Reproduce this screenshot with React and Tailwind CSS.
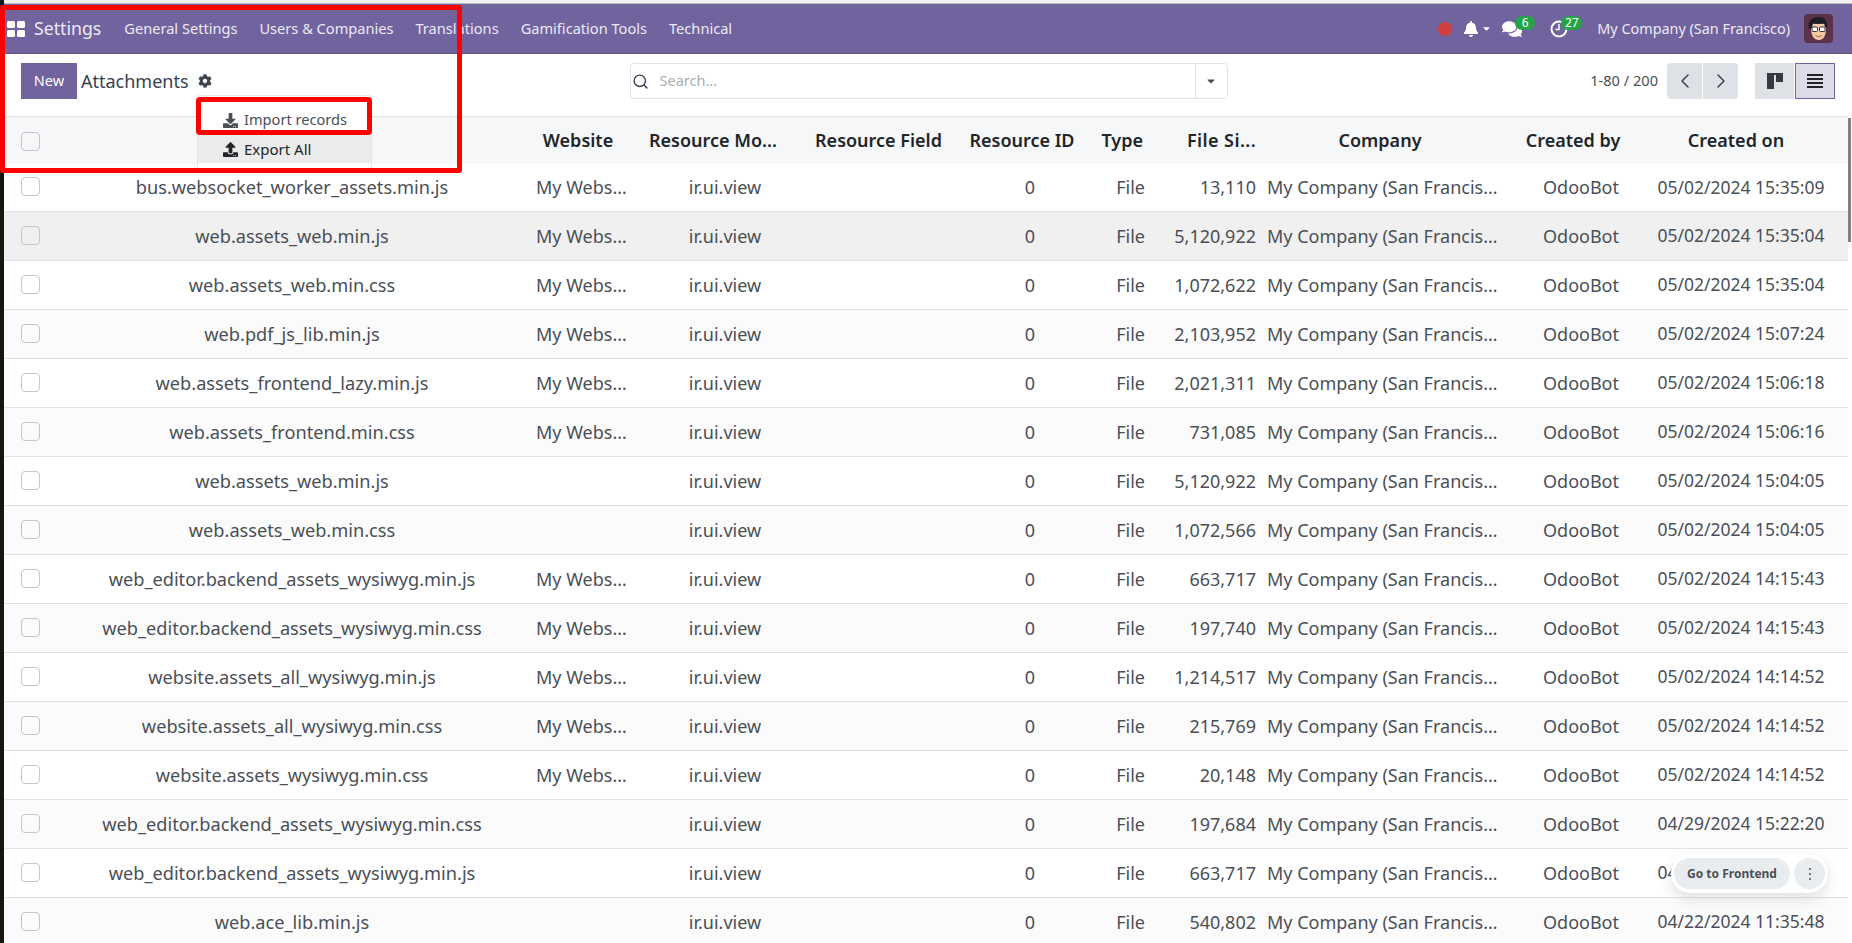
import { FaCog, FaDownload, FaUpload, FaBell, FaComments, FaCaretDown } from "react-icons/fa";
import { LuChevronLeft, LuChevronRight, LuSearch } from "react-icons/lu";

const site = "My Websites";
const co = "My Company (San Francisco)";

const rows = [
  ["bus.websocket_worker_assets.min.js", site, "13,110", "05/02/2024 15:35:09"],
  ["web.assets_web.min.js", site, "5,120,922", "05/02/2024 15:35:04"],
  ["web.assets_web.min.css", site, "1,072,622", "05/02/2024 15:35:04"],
  ["web.pdf_js_lib.min.js", site, "2,103,952", "05/02/2024 15:07:24"],
  ["web.assets_frontend_lazy.min.js", site, "2,021,311", "05/02/2024 15:06:18"],
  ["web.assets_frontend.min.css", site, "731,085", "05/02/2024 15:06:16"],
  ["web.assets_web.min.js", "", "5,120,922", "05/02/2024 15:04:05"],
  ["web.assets_web.min.css", "", "1,072,566", "05/02/2024 15:04:05"],
  ["web_editor.backend_assets_wysiwyg.min.js", site, "663,717", "05/02/2024 14:15:43"],
  ["web_editor.backend_assets_wysiwyg.min.css", site, "197,740", "05/02/2024 14:15:43"],
  ["website.assets_all_wysiwyg.min.js", site, "1,214,517", "05/02/2024 14:14:52"],
  ["website.assets_all_wysiwyg.min.css", site, "215,769", "05/02/2024 14:14:52"],
  ["website.assets_wysiwyg.min.css", site, "20,148", "05/02/2024 14:14:52"],
  ["web_editor.backend_assets_wysiwyg.min.css", "", "197,684", "04/29/2024 15:22:20"],
  ["web_editor.backend_assets_wysiwyg.min.js", "", "663,717", "04/29/2024 15:22:20"],
  ["web.ace_lib.min.js", "", "540,802", "04/22/2024 11:35:48"],
];

const menus = ["General Settings", "Users & Companies", "Translations", "Gamification Tools", "Technical"];

const Checkbox = ({ className }) => (
  <div className={`w-[19px] h-[19px] border border-[#c4c6c9] rounded-[4px] bg-transparent ml-[17px] ${className}`} />
);

const Avatar = () => (
  <svg viewBox="0 0 29 29" className="w-[29px] h-[29px] ml-[14px]">
    <rect width="29" height="29" rx="4" fill="#5b3249" />
    <path d="M7 14c0 8 3 12 8 12s7-5 7-12V10H7z" fill="#f3c9a4" />
    <path d="M5 15C3 7 8 3 15 3c5 0 9 3 8 11l-2-1-1-4c-4 1-8 1-11 0l-1 5z" fill="#1d1d22" />
    <rect x="8" y="13" width="5.5" height="4.5" rx="1" fill="#fff" stroke="#333" strokeWidth="1" />
    <rect x="15.5" y="13" width="5.5" height="4.5" rx="1" fill="#fff" stroke="#333" strokeWidth="1" />
    <path d="M11.5 21.5c2 1.500 4 1.500 6 0" stroke="#a8604a" strokeWidth="1" fill="none" />
  </svg>
);

export default function App() {
  return (
    <div className="relative h-screen overflow-hidden flex bg-white text-[#4a4f57] font-['Noto_Sans',sans-serif]">
      <div className="w-[4px] bg-[#16170f] shrink-0" />

      <div className="flex-1 min-w-0 flex flex-col">
        <div className="h-[4px] shrink-0 bg-[#f1f1f1] border-b border-[#bdbdbd]" />

        <nav className="h-[50px] shrink-0 flex items-center bg-[#71639e] border-b border-[#5f5389] text-[#ece9f3] text-[14.6px]">
          <svg viewBox="0 0 18 16" className="w-[18px] h-[16px] ml-[3px]" fill="#fff">
            <rect x="0" y="0" width="8" height="7" rx="1.500" />
            <rect x="10" y="0" width="8" height="7" rx="1.500" />
            <rect x="0" y="9" width="8" height="7" rx="1.500" />
            <rect x="10" y="9" width="8" height="7" rx="1.500" />
          </svg>
          <span className="text-[17.7px] ml-[9px] mr-[1px]">Settings</span>
          {menus.map((label) => (
            <span key={label} className="ml-[22px]">{label}</span>
          ))}
          <div className="ml-auto flex items-center mr-[19px]">
            <span className="w-[14px] h-[14px] rounded-full bg-[#d23f3f]" />
            <FaBell className="ml-[11px] text-[16px] text-white" />
            <FaCaretDown className="ml-[2px] text-[11px] text-white" />
            <span className="relative ml-[10px]">
              <FaComments className="text-[20px] text-white" />
              <span className="absolute -top-[3px] left-[13px] w-[20px] h-[14px] rounded-full bg-[#22a447] text-white text-[12px] leading-[14px] text-center">6</span>
            </span>
            <span className="relative ml-[28px]">
              <svg viewBox="0 0 18 18" className="w-[18px] h-[18px]" fill="none" stroke="#fff" strokeWidth="2">
                <circle cx="9" cy="9" r="7.500" />
                <path d="M9 4v5.500H5.500" strokeWidth="1.500" />
              </svg>
              <span className="absolute -top-[4px] left-[11px] w-[21px] h-[14px] rounded-full bg-[#22a447] text-white text-[12px] leading-[14px] text-center">27</span>
            </span>
            <span className="ml-[29px] text-[14.4px]">My Company (San Francisco)</span>
            <Avatar />
          </div>
        </nav>

        <div className="h-[62px] shrink-0 pb-[8px] flex items-center">
          <button className="w-[56px] h-[36px] ml-[17px] bg-[#71639e] text-white text-[14.5px]">New</button>
          <span className="ml-[4px] text-[18px] text-[#374151]">Attachments</span>
          <FaCog className="ml-[9px] text-[14px] text-[#3f4650]" />
          <div className="ml-[418px] w-[598px] h-[36px] flex items-center border border-[#dfe2e6] rounded-[4px]">
            <LuSearch className="ml-[1px] text-[17px] text-[#374151]" strokeWidth={2} />
            <span className="ml-[11px] text-[14.5px] text-[#a9adb3]">Search...</span>
            <div className="ml-auto w-[32px] h-full flex items-center justify-center border-l border-[#dfe2e6]">
              <FaCaretDown className="text-[12px] text-[#4a4f57]" />
            </div>
          </div>
          <span className="ml-auto text-[14.6px] text-[#4a4f57]">1-80 / 200</span>
          <div className="ml-[9px] flex gap-px">
            <button className="w-[35px] h-[36px] flex items-center justify-center bg-[#dee2e6] rounded-l-[4px]">
              <LuChevronLeft className="text-[24px] text-[#374151]" strokeWidth={1.5} />
            </button>
            <button className="w-[35px] h-[36px] flex items-center justify-center bg-[#dee2e6] rounded-r-[4px]">
              <LuChevronRight className="text-[24px] text-[#374151]" strokeWidth={1.5} />
            </button>
          </div>
          <button className="ml-[17px] w-[39px] h-[36px] flex items-center justify-center bg-[#dee2e6]">
            <svg viewBox="0 0 16 16" className="w-[16px] h-[16px]" fill="#343a40">
              <rect x="0" y="0" width="16" height="2" />
              <rect x="0" y="2" width="7" height="14" />
              <rect x="9" y="2" width="7" height="7" />
            </svg>
          </button>
          <button className="ml-px mr-[17px] w-[40px] h-[36px] flex items-center justify-center bg-[#dddbe8] border border-[#71639e]">
            <svg viewBox="0 0 16 14" className="w-[16px] h-[14px]" fill="#212529">
              <rect x="0" y="0" width="16" height="2" />
              <rect x="0" y="4" width="16" height="2" />
              <rect x="0" y="8" width="16" height="2" />
              <rect x="0" y="12" width="16" height="2" />
            </svg>
          </button>
        </div>

        <table className="table-fixed w-[1844px] border-t border-[#e1e3e8] text-[18px] leading-none">
          <colgroup>
            <col className="w-[53px]" />
            <col className="w-[470px]" />
            <col className="w-[114px]" />
            <col className="w-[168px]" />
            <col className="w-[151px]" />
            <col className="w-[140px]" />
            <col className="w-[55px]" />
            <col className="w-[107px]" />
            <col className="w-[244px]" />
            <col className="w-[150px]" />
            <col className="w-[170px]" />
            <col />
          </colgroup>
          <thead>
            <tr className="h-[47px] bg-[#f6f7f9] text-[#212529]">
              <th><Checkbox className="mt-[2px]" /></th>
              <th />
              <th className="font-semibold pr-[12px]">Website</th>
              <th className="font-semibold pr-[24px] whitespace-nowrap">Resource Mo...</th>
              <th className="font-semibold pr-[12px] whitespace-nowrap">Resource Field</th>
              <th className="font-semibold pr-[16px] whitespace-nowrap">Resource ID</th>
              <th className="font-semibold text-right pr-[12px]">Type</th>
              <th className="font-semibold text-right pr-[6px] whitespace-nowrap tracking-[0.4px]">File Si...</th>
              <th className="font-semibold pr-[8px]">Company</th>
              <th className="font-semibold pr-[16px] whitespace-nowrap">Created by</th>
              <th className="font-semibold pr-[10px] whitespace-nowrap">Created on</th>
              <th />
            </tr>
          </thead>
          <tbody>
            {rows.map((r, i) => (
              <tr
                key={i}
                className={`${i === 0 ? "h-[48px]" : "h-[49px]"} border-b border-[#e2e3ea] ${i === 1 ? "bg-[#f0f0f0]" : i % 2 ? "bg-[#fbfbfc]" : "bg-white"}`}
              >
                <td><Checkbox className="mb-[2px]" /></td>
                <td className="text-center truncate text-[18.2px]">{r[0]}</td>
                <td className="text-center truncate pl-[9px] pr-[11px]">{r[1]}</td>
                <td className="text-center">ir.ui.view</td>
                <td />
                <td className="text-center">0</td>
                <td className="text-right pr-[10px]">File</td>
                <td className="text-right pr-[6px]">{r[2]}</td>
                <td className="text-center truncate px-[5px]">{co}</td>
                <td className="text-center">OdooBot</td>
                <td className="text-center whitespace-nowrap text-[17.5px]">{r[3]}</td>
                <td />
              </tr>
            ))}
          </tbody>
        </table>
      </div>

      {/* export dropdown opened from the cog */}
      <div className="absolute left-[197px] top-[95px] w-[175px] h-[77px] bg-white border-x border-t border-[#e3e5e8] rounded-t-[3px]">
        <div className="h-[39px] pt-[9px] flex items-center pl-[25px] text-[#4a4f57] text-[14.6px]">
          <FaDownload className="text-[15px]" />
          <span className="ml-[6px]">Import records</span>
        </div>
        <div className="h-[28px] flex items-center pl-[25px] bg-[#ebebeb] text-[#212529] text-[15px]">
          <FaUpload className="text-[15px]" />
          <span className="ml-[6px]">Export All</span>
        </div>
      </div>

      {/* screenshot annotations */}
      <div className="absolute left-0 top-[5px] w-[462px] h-[168px] border-[5px] border-[#ff0000] rounded-[3px]" />
      <div className="absolute left-[196px] top-[97px] w-[176px] h-[38px] border-[5px] border-[#ff0000] rounded-[4px]" />

      {/* scrollbar thumb */}
      <div className="absolute left-[1848px] top-[118px] w-[3px] h-[124px] bg-[#808080]" />

      {/* frontend shortcut */}
      <div className="absolute left-[1671px] top-[854px] w-[157px] h-[39px] flex items-center gap-[4px] px-[3px] bg-white rounded-full shadow-[0_6px_14px_rgba(0,0,0,0.12)]">
        <button className="w-[116px] h-[31px] rounded-full bg-[#e9ecef] text-[#495057] text-[12px] font-bold">Go to Frontend</button>
        <button className="w-[31px] h-[31px] rounded-full bg-[#e9ecef] flex flex-col items-center justify-center gap-[3px]">
          <span className="w-[2px] h-[2px] rounded-full bg-[#495057]" />
          <span className="w-[2px] h-[2px] rounded-full bg-[#495057]" />
          <span className="w-[2px] h-[2px] rounded-full bg-[#495057]" />
        </button>
      </div>
    </div>
  );
}
